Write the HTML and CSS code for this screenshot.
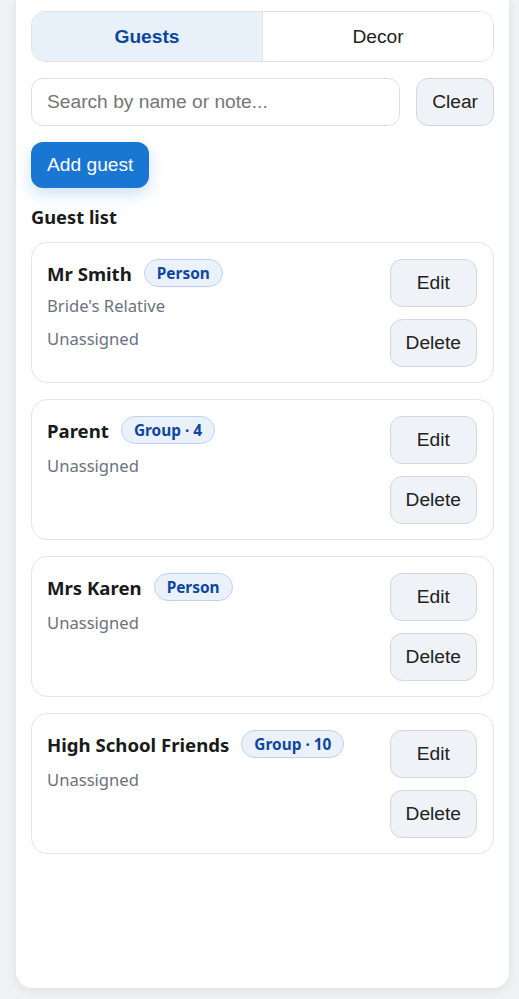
FILE: index.html
```html
<!DOCTYPE html>
<html lang="en">
<head>
<meta charset="utf-8">
<title>Guests</title>
<link rel="stylesheet" href="styles.css">
</head>
<body>
<div class="panel">
  <div class="tabs">
    <button class="tab active">Guests</button>
    <button class="tab">Decor</button>
  </div>
  <div class="search-row">
    <input class="search" type="text" placeholder="Search by name or note...">
    <button class="btn">Clear</button>
  </div>
  <button class="btn-primary">Add guest</button>
  <h2 class="section-title">Guest list</h2>
  <div class="list">
    <div class="card">
      <div class="info">
        <div class="name-row"><span class="name">Mr Smith</span><span class="badge">Person</span></div>
        <div class="meta note">Bride's Relative</div>
        <div class="meta seat">Unassigned</div>
      </div>
      <div class="actions"><button class="btn">Edit</button><button class="btn">Delete</button></div>
    </div>
    <div class="card">
      <div class="info">
        <div class="name-row"><span class="name">Parent</span><span class="badge">Group · 4</span></div>
        <div class="meta seat">Unassigned</div>
      </div>
      <div class="actions"><button class="btn">Edit</button><button class="btn">Delete</button></div>
    </div>
    <div class="card">
      <div class="info">
        <div class="name-row"><span class="name">Mrs Karen</span><span class="badge">Person</span></div>
        <div class="meta seat">Unassigned</div>
      </div>
      <div class="actions"><button class="btn">Edit</button><button class="btn">Delete</button></div>
    </div>
    <div class="card">
      <div class="info">
        <div class="name-row"><span class="name">High School Friends</span><span class="badge">Group · 10</span></div>
        <div class="meta seat">Unassigned</div>
      </div>
      <div class="actions"><button class="btn">Edit</button><button class="btn">Delete</button></div>
    </div>
  </div>
</div>
</body>
</html>
```
FILE: styles.css
```css
* { box-sizing: border-box; }
html, body { margin: 0; padding: 0; }
body {
  background: #f0f1f3;
  font-family: "Noto Sans", "Open Sans", sans-serif;
  color: #1f2328;
  height: 999px;
  overflow: hidden;
}
.panel {
  width: 493px;
  height: 988px;
  margin-left: 16px;
  background: #ffffff;
  border-radius: 0 0 16px 16px;
  box-shadow: 0 2px 10px rgba(0, 0, 0, 0.08);
  padding: 11px 15px;
  display: flex;
  flex-direction: column;
  align-items: stretch;
}
.tabs {
  display: flex;
  border: 1px solid #dfe2e6;
  border-radius: 14px;
  overflow: hidden;
}
.tab {
  flex: 1;
  border: 0;
  background: #fff;
  font-family: "Liberation Sans", Arial, sans-serif;
  font-size: 19.2px;
  line-height: 22px;
  padding: 14px 0 13px;
  color: #222;
}
.tab + .tab { border-left: 1px solid #dfe2e6; }
.tab.active {
  background: #e8f0fa;
  color: #0b47a0;
  font-weight: bold;
}
.search-row {
  display: flex;
  gap: 16px;
  margin-top: 16px;
}
.search {
  flex: 1;
  height: 48px;
  border: 1px solid #dcdfe3;
  border-radius: 12px;
  padding: 0 15px;
  font-family: "Liberation Sans", Arial, sans-serif;
  font-size: 19.2px;
  color: #222;
  outline: none;
}
.search::placeholder { color: #767676; }
.btn {
  font-family: "Liberation Sans", Arial, sans-serif;
  font-size: 19.2px;
  line-height: 22px;
  height: 48px;
  padding: 0 15px;
  background: #eff3f8;
  border: 1px solid #d2d7de;
  border-radius: 12px;
  color: #222;
}
.btn-primary {
  align-self: flex-start;
  margin-top: 16px;
  font-family: "Liberation Sans", Arial, sans-serif;
  font-size: 19.2px;
  line-height: 22px;
  padding: 12px 16px;
  border: 0;
  border-radius: 12px;
  background: #1976d2;
  color: #fff;
  box-shadow: 0 6px 16px rgba(25, 118, 210, 0.22);
}
.section-title {
  margin: 17px 0 13px;
  font-size: 18.3px;
  line-height: 24px;
  font-weight: 700;
  color: #1a1a1a;
}
.list {
  display: flex;
  flex-direction: column;
  gap: 16px;
}
.card {
  display: flex;
  align-items: flex-start;
  border: 1px solid #e2e4e7;
  border-radius: 16px;
  padding: 16px 16px 15px 15px;
}
.info { flex: 1; }
.name-row {
  display: flex;
  align-items: center;
  gap: 12px;
  height: 28px;
}
.name {
  font-size: 18.6px;
  font-weight: 700;
  color: #1a1a1a;
}
.badge {
  border: 1px solid #bcd3ef;
  background: #eaf1fb;
  color: #0d47a1;
  font-size: 15.4px;
  font-weight: 700;
  line-height: 20px;
  padding: 4px 12px 2px;
  border-radius: 999px;
}
.meta {
  font-size: 16.6px;
  line-height: 24px;
  color: #6b7280;
}
.note { margin-top: 7px; }
.seat { margin-top: 10px; }
.note + .seat { margin-top: 9px; }
.actions {
  display: flex;
  flex-direction: column;
  gap: 12px;
}
```
